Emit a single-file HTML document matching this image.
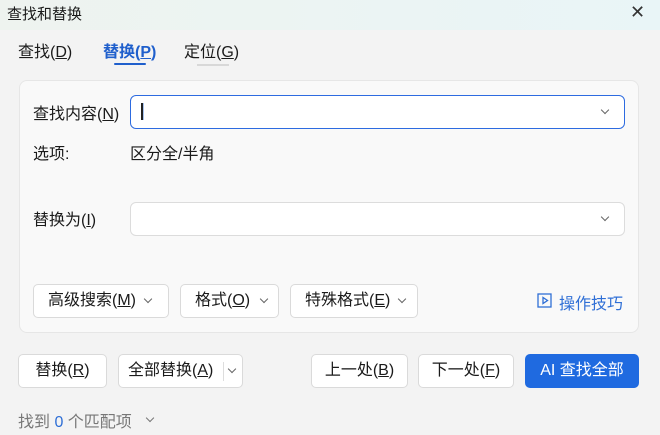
<!DOCTYPE html><html><head><meta charset="utf-8"><style>
*{box-sizing:border-box;margin:0;padding:0}
body{width:660px;height:435px;overflow:hidden;background:#f3f3f3;font-family:"Liberation Sans","Noto Sans CJK SC",sans-serif;font-size:16px;color:#1a1a1a;position:relative}
.a{position:absolute;white-space:nowrap}
.title{left:0;top:0;width:660px;height:30px;background:linear-gradient(90deg,#eef3ef,#e9f5f7);}
.panel{left:19px;top:80px;width:620px;height:253px;background:#f9f9f9;border:1px solid #e6e6e6;border-radius:8px}
.inp{background:#fff;border:1px solid #dcdcdc;border-radius:6px}
.btn{background:#fff;border:1px solid #dadada;border-radius:5px;line-height:31px}
.btn span.t{position:absolute;top:0}
.chev{position:absolute;display:inline-block;width:6px;height:6px;border-right:1.3px solid #666;border-bottom:1.3px solid #666;transform:rotate(45deg)}
u{text-decoration:underline}
</style></head><body>
<div class="a title"></div>
<div class="a" style="left:7px;top:3px;font-size:15px">查找和替换</div>
<div class="a" style="left:630px;top:2px;font-size:18px;color:#333">✕</div>
<div class="a" style="left:18px;top:38px">查找(<u>D</u>)</div>
<div class="a" style="left:103px;top:38px;color:#1f5fcc;font-weight:bold">替换(<u>P</u>)</div>
<div class="a" style="left:114px;top:63px;width:32px;height:2px;background:#1f5fcc;border-radius:1px"></div>
<div class="a" style="left:184px;top:38px">定位(<u>G</u>)</div>
<div class="a" style="left:197px;top:64px;width:32px;height:2px;background:#d8d8d8"></div>
<div class="a panel"></div>
<div class="a" style="left:33px;top:100px">查找内容(<u>N</u>)</div>
<div class="a inp" style="left:130px;top:95px;width:495px;height:34px;border-color:#2d6be0"></div>
<div class="a" style="left:141px;top:103px;width:2px;height:17px;background:#222;box-shadow:1px 0 0 #a8c4f0"></div>
<span class="chev" style="left:602px;top:107px"></span>
<div class="a" style="left:33px;top:140px">选项:</div>
<div class="a" style="left:130px;top:140px">区分全/半角</div>
<div class="a" style="left:33px;top:206px">替换为(<u>I</u>)</div>
<div class="a inp" style="left:130px;top:202px;width:495px;height:34px"></div>
<span class="chev" style="left:602px;top:214px"></span>
<div class="a btn" style="left:33px;top:284px;width:136px;height:34px"><span class="t" style="left:14px">高级搜索(<u>M</u>)</span><span class="chev" style="left:111px;top:11px"></span></div>
<div class="a btn" style="left:180px;top:284px;width:99px;height:34px"><span class="t" style="left:14px">格式(<u>O</u>)</span><span class="chev" style="left:80px;top:11px"></span></div>
<div class="a btn" style="left:290px;top:284px;width:128px;height:34px"><span class="t" style="left:14px">特殊格式(<u>E</u>)</span><span class="chev" style="left:108px;top:11px"></span></div>
<svg class="a" style="left:537px;top:293px" width="16" height="16"><rect x="1" y="1" width="13" height="13" fill="none" stroke="#2f6fd6" stroke-width="1.3"/><path d="M6 4.5v6l4.5-3z" fill="none" stroke="#2f6fd6" stroke-width="1.3"/></svg>
<div class="a" style="left:559px;top:290px;color:#2f6fd6;font-size:16px">操作技巧</div>
<div class="a btn" style="left:18px;top:354px;width:89px;height:34px;text-align:center">替换(<u>R</u>)</div>
<div class="a btn" style="left:118px;top:354px;width:125px;height:34px"><span class="t" style="left:9px">全部替换(<u>A</u>)</span><span style="position:absolute;left:104px;top:7px;width:1px;height:19px;background:#ddd"></span><span class="chev" style="left:110px;top:11px"></span></div>
<div class="a btn" style="left:311px;top:354px;width:97px;height:34px;text-align:center">上一处(<u>B</u>)</div>
<div class="a btn" style="left:418px;top:354px;width:96px;height:34px;text-align:center">下一处(<u>F</u>)</div>
<div class="a btn" style="left:525px;top:354px;width:114px;height:34px;background:#1f6ae0;border-color:#1f6ae0;color:#fff;text-align:center">AI 查找全部</div>
<div class="a" style="left:18px;top:408px;color:#777">找到 <span style="color:#2f6fd6">0</span> 个匹配项</div>
<span class="chev" style="left:147px;top:415px;border-color:#777"></span>
</body></html>
